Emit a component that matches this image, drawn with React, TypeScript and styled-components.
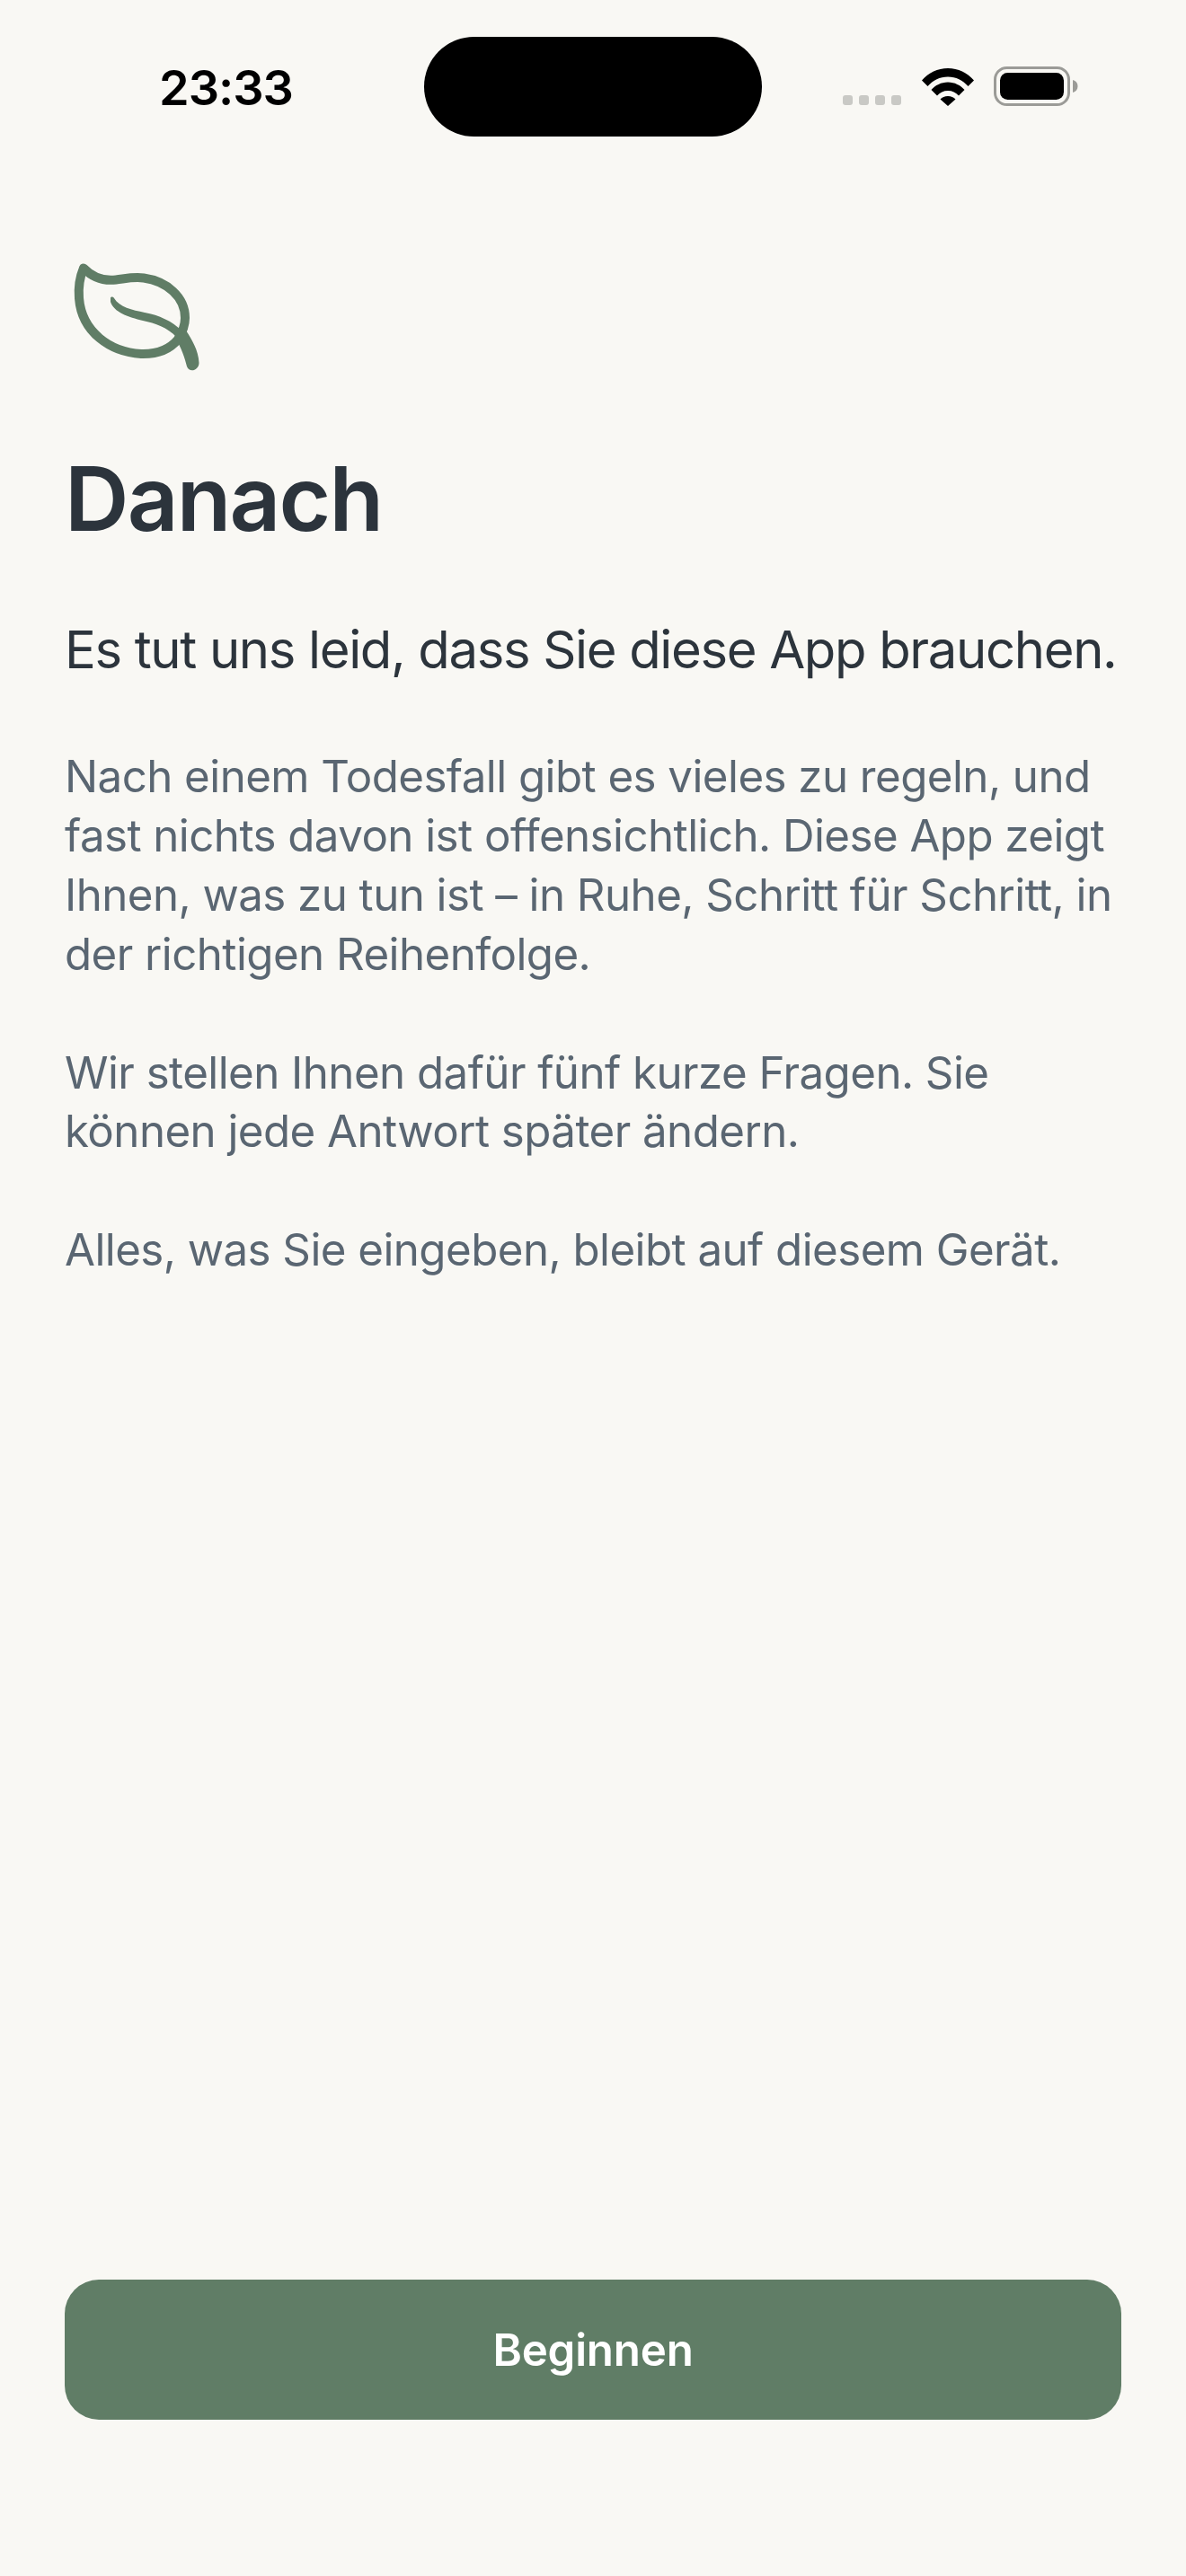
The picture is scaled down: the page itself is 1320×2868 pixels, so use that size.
import React from "react";
import styled, { createGlobalStyle } from "styled-components";

const Global = createGlobalStyle`
  html, body { margin: 0; padding: 0; background: #f9f8f4; }
  body { font-family: Inter, "Noto Sans", sans-serif; -webkit-font-smoothing: antialiased; }
`;

const Screen = styled.main`
  width: 1320px;
  height: 2868px;
  box-sizing: border-box;
  background: #f9f8f4;
  display: flex;
  flex-direction: column;
  position: relative;
  overflow: hidden;
`;

const StatusBar = styled.header`
  height: 152px;
  flex: none;
  display: flex;
  align-items: flex-start;
  justify-content: space-between;
  padding: 68px 120px 0 177px;
  box-sizing: border-box;
`;

const Time = styled.span`
  font-size: 54px;
  line-height: 60px;
  font-weight: 560;
  color: #000;
  letter-spacing: -1px;
`;

const Island = styled.div`
  position: absolute;
  left: 472px;
  top: 41px;
  width: 376px;
  height: 111px;
  border-radius: 56px;
  background: #000;
`;

const Indicators = styled.div`
  display: flex;
  align-items: flex-end;
  padding-top: 7px;
  height: 43px;
`;

const SignalDots = styled.div`
  display: flex;
  gap: 7px;
  margin-right: 23px;
  padding-bottom: 1px;
`;

const Dot = styled.span`
  width: 11px;
  height: 11px;
  border-radius: 3px;
  background: #c9c9c5;
`;

const Wifi = styled.svg`
  width: 58px;
  height: 43px;
  display: block;
  margin-right: 22px;
`;

const Battery = styled.svg`
  width: 94px;
  height: 44px;
  display: block;
`;

const Content = styled.section`
  flex: 1;
  display: flex;
  flex-direction: column;
  padding: 118px 72px 0;
`;

const Leaf = styled.svg`
  width: 160px;
  height: 150px;
  display: block;
  margin-left: 1px;
`;

const Title = styled.h1`
  margin: 77px 0 0;
  font-size: 99px;
  line-height: 116px;
  font-weight: 600;
  color: #2c343c;
  letter-spacing: -1.8px;
`;

const Lead = styled.p`
  margin: 71px 0 4px;
  font-size: 58px;
  line-height: 78px;
  font-weight: 400;
  color: #2c343c;
  letter-spacing: -1.35px;
  white-space: nowrap;
`;

const Body = styled.p`
  margin: 66.4px 0 0;
  font-size: 49.26px;
  line-height: 65.7px;
  font-weight: 400;
  color: #5a6672;
  letter-spacing: -0.55px;
`;

const Footer = styled.footer`
  flex: none;
  padding: 0 72px 174px;
`;

const PrimaryButton = styled.button`
  display: block;
  width: 100%;
  height: 156px;
  border: 0;
  border-radius: 38px;
  background: #607d66;
  color: #fff;
  font-family: inherit;
  font-size: 49.26px;
  font-weight: 560;
  letter-spacing: -0.2px;
`;

export default function App() {
  return (
    <Screen>
      <Global />
      <StatusBar>
        <Time>23:33</Time>
        <Indicators>
          <SignalDots>
            <Dot /><Dot /><Dot /><Dot />
          </SignalDots>
          <Wifi viewBox="0 0 58 43">
            <path
              fill="#000"
              d="M0 14.500C7.500 6 17.500 1 29 1s21.500 5 29 13.500l-6.500 6.500C45.500 14.500 38 10.500 29 10.500S12.500 14.500 6.500 21zM10.500 25C15 20 21.500 16.500 29 16.500S43 20 47.500 25L41 31.500C38 28 33.800 26 29 26s-9 2-12 5.500zM20.500 35.500C22.500 33.500 25.500 32 29 32s6.500 1.500 8.500 3.500L29 43z"
            />
          </Wifi>
          <Battery viewBox="0 0 94 44">
            <rect x="1.500" y="1.500" width="82" height="41" rx="13" fill="none" stroke="#9b9b97" strokeWidth="3" />
            <rect x="7" y="7" width="71" height="30" rx="8.500" fill="#000" />
            <path fill="#9b9b97" d="M88 15c3.500 1 5.500 3.500 5.500 7s-2 6-5.500 7z" />
          </Battery>
        </Indicators>
      </StatusBar>
      <Island />
      <Content>
        <Leaf viewBox="12 0 160 150" aria-hidden="true">
          <path
            fill="none"
            stroke="#607d66"
            strokeLinecap="round"
            strokeLinejoin="round"
            strokeWidth="10"
            d="M32 28.500C43 40 55 43 68 41.500C80 40 88 38 99 39.500C124 43 145 60 145 84C145 92 142 100 137 108C127 120 112 124.500 96 124C62 122 30 100 27 62C26 50 28 38 32 28.500Z"
          />
          <path
            fill="#607d66"
            d="M62 62C62 60 65 60 66 62C72 72 86 75 100 78C116 81 130 87 142 99L136 106C125 94 112 90 98 87C82 83 66 78 62 66Z"
          />
          <path
            fill="#607d66"
            d="M133 105L146 98C152 107 160 120 160.500 134C160.500 142 150 146 147 138C145 130 141 116 133 105Z"
          />
        </Leaf>
        <Title>Danach</Title>
        <Lead>Es tut uns leid, dass Sie diese App brauchen.</Lead>
        <Body>
          Nach einem Todesfall gibt es vieles zu regeln, und fast nichts davon ist offensichtlich. Diese App zeigt Ihnen, was zu tun ist – in Ruhe, Schritt für Schritt, in der richtigen Reihenfolge.
        </Body>
        <Body>
          Wir stellen Ihnen dafür fünf kurze Fragen. Sie können jede Antwort später ändern.
        </Body>
        <Body>Alles, was Sie eingeben, bleibt auf diesem Gerät.</Body>
      </Content>
      <Footer>
        <PrimaryButton>Beginnen</PrimaryButton>
      </Footer>
    </Screen>
  );
}
